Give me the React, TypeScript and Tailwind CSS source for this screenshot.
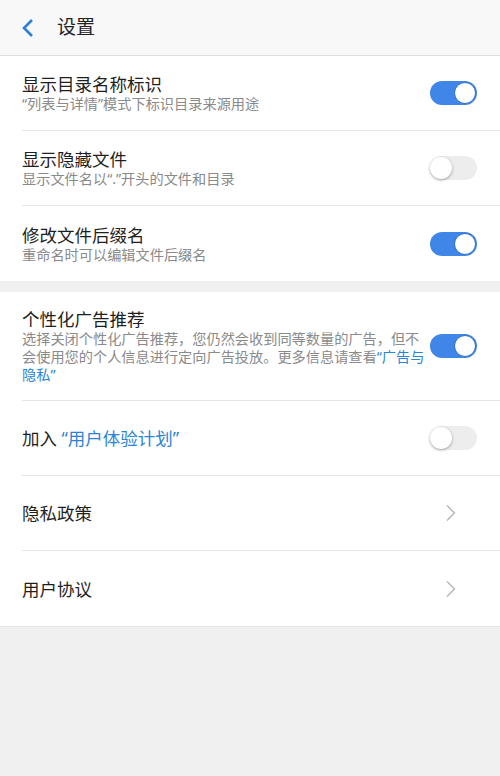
import { useState } from "react";

type ToggleProps = { on: boolean; onChange: () => void };

function Toggle({ on, onChange }: ToggleProps) {
  return (
    <button
      type="button"
      onClick={onChange}
      className={`relative h-[24px] w-[47px] shrink-0 rounded-full ${
        on ? "bg-[#3f86e8]" : "bg-[#ededed]"
      }`}
    >
      <span
        className={`absolute top-[1px] h-[22px] w-[22px] rounded-full bg-white ${
          on
            ? "right-[1px] border border-[#2f6fc9]"
            : "left-0 shadow-[0_1px_3px_rgba(0,0,0,0.35)]"
        }`}
      />
    </button>
  );
}

function Chevron() {
  return (
    <svg width="12" height="18" viewBox="0 0 12 18" className="mr-[20px] shrink-0">
      <path d="M2 1.5 L9.5 9 L2 16.5" fill="none" stroke="#b5b5b5" strokeWidth="1.4" />
    </svg>
  );
}

function Row({
  children,
  right,
  last,
}: {
  children: React.ReactNode;
  right: React.ReactNode;
  last?: boolean;
}) {
  return (
    <div className="pl-[22px]">
      <div
        className={`flex min-h-[75px] items-center justify-between py-4 pr-[23px] ${
          last ? "" : "border-b border-[#e6e6e6]"
        }`}
      >
        <div className="min-w-0 flex-1">{children}</div>
        {right}
      </div>
    </div>
  );
}

const title = "text-[17.5px] leading-[22px] text-[#1f1f1f]";
const sub = "text-[14.2px] leading-[18px] text-[#8a8a8a]";

export default function App() {
  const [t, setT] = useState([true, false, true, true, false]);
  const flip = (i: number) => setT((s) => s.map((v, j) => (j === i ? !v : v)));

  return (
    <div
      className="min-h-[776px] w-[500px] bg-[#f0f0f0]"
      style={{ fontFamily: '"Noto Sans", "Noto Sans CJK SC", sans-serif' }}
    >
      <header className="flex h-[56px] items-center border-b border-[#dedede] bg-[#f8f8f8]">
        <svg width="14" height="20" viewBox="0 0 14 20" className="ml-[21px]">
          <path d="M11 2 L3 10 L11 18" fill="none" stroke="#2b7fe0" strokeWidth="2.6" />
        </svg>
        <h1 className="ml-[22px] text-[19px] text-[#222]">设置</h1>
      </header>

      <section className="bg-white">
        <Row right={<Toggle on={t[0]} onChange={() => flip(0)} />}>
          <div className={title}>显示目录名称标识</div>
          <div className={sub}>“列表与详情”模式下标识目录来源用途</div>
        </Row>
        <Row right={<Toggle on={t[1]} onChange={() => flip(1)} />}>
          <div className={title}>显示隐藏文件</div>
          <div className={sub}>显示文件名以“.”开头的文件和目录</div>
        </Row>
        <Row right={<Toggle on={t[2]} onChange={() => flip(2)} />} last>
          <div className={title}>修改文件后缀名</div>
          <div className={sub}>重命名时可以编辑文件后缀名</div>
        </Row>
      </section>

      <section className="mt-[11px] border-b border-[#e6e6e6] bg-white">
        <Row right={<Toggle on={t[3]} onChange={() => flip(3)} />}>
          <div className={title}>个性化广告推荐</div>
          <div className={sub}>
            选择关闭个性化广告推荐，您仍然会收到同等数量的广告，但不会使用您的个人信息进行定向广告投放。更多信息请查看
            <span className="text-[#2a84d8]">“广告与隐私”</span>
          </div>
        </Row>
        <Row right={<Toggle on={t[4]} onChange={() => flip(4)} />}>
          <div className={title}>
            加入 <span className="text-[#2a84d8]">“用户体验计划”</span>
          </div>
        </Row>
        <Row right={<Chevron />}>
          <div className={title}>隐私政策</div>
        </Row>
        <Row right={<Chevron />} last>
          <div className={title}>用户协议</div>
        </Row>
      </section>
    </div>
  );
}
